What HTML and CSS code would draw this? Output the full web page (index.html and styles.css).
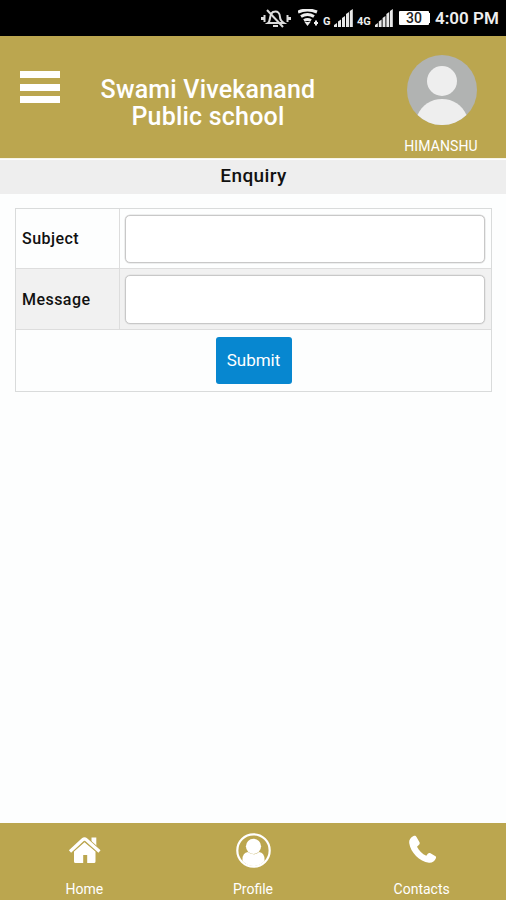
FILE: index.html
```html
<!DOCTYPE html>
<html lang="en">
<head>
  <meta charset="UTF-8" />
  <meta name="viewport" content="width=device-width, initial-scale=1.0" />
  <title>Enquiry</title>
  <link rel="stylesheet" href="styles.css">
</head>
<body>
  <div class="statusbar">
    <svg class="bell" width="32" height="20" viewBox="0 0 32 20" fill="none" stroke="#dcdcdc" stroke-width="2">
      <path d="M8 14c3-2 1-9 5-11 5-2 7 2 7 5 0 3 1 4 4 6z" />
      <path d="M13 17h5" />
      <path d="M7 1l16 17" />
      <path d="M4.500 6v7M27.500 6v7" />
      <path d="M1 9.500h4M27 9.500h4" stroke-width="3" />
    </svg>
    <svg class="wifi" width="21" height="18" viewBox="0 0 21 18" fill="none" stroke="#eee" stroke-width="3">
      <path d="M0 3q9.500-4 19 0M3 7.500q6.500-4 13 0M6 11.500q3.500-2 7 0" />
      <path d="M6.500 13h6L9.500 17z" fill="#eee" stroke="none" />
      <path d="M18 11.500v5M16 14h4" stroke-width="2" />
    </svg>
    <span class="net net-g">G</span>
    <svg class="bars" width="19" height="18" viewBox="0 0 19 18" fill="#e8e8e8">
      <path d="M0 16l3-2v4H0zM4 12.500l3-2V18H4zM8 9l3-2v11H8zM12 5l3-2v15h-3zM15.800 2l3-2v18h-3z" />
    </svg>
    <span class="net net-4g">4G</span>
    <svg class="bars" width="18" height="18" viewBox="0 0 19 18" preserveAspectRatio="none" fill="#e8e8e8">
      <path d="M0 16l3-2v4H0zM4 12.500l3-2V18H4zM8 9l3-2v11H8zM12 5l3-2v15h-3zM15.800 2l3-2v18h-3z" />
    </svg>
    <span class="battery">30</span>
    <span class="time">4:00 PM</span>
  </div>

  <header class="header">
    <div class="menu">
      <span></span>
      <span></span>
      <span></span>
    </div>
    <h1 class="school">Swami Vivekanand<br>Public school</h1>
    <div class="user">
      <svg width="70" height="70" viewBox="0 0 70 70">
        <circle cx="35" cy="35" r="35" fill="#b1b3b2" />
        <circle cx="35" cy="26" r="15" fill="#eee" />
        <path d="M10.500 60C15 50 24 44 35 44s20 6 24.500 16A35 35 0 0 1 10.500 60z" fill="#eee" />
      </svg>
      <span class="username">HIMANSHU</span>
    </div>
  </header>

  <h2 class="title">Enquiry</h2>

  <main class="content">
    <form class="form">
      <div class="row">
        <label class="label" for="subject">Subject</label>
        <div class="field"><input type="text" id="subject"></div>
      </div>
      <div class="row row-alt">
        <label class="label" for="message">Message</label>
        <div class="field"><input type="text" id="message"></div>
      </div>
      <div class="row row-submit">
        <button type="button" class="submit">Submit</button>
      </div>
    </form>
  </main>

  <nav class="tabs">
    <a class="tab">
      <svg width="36" height="36" viewBox="0 0 36 36" fill="#fff">
        <path d="M18.500 10.200L29.500 19.500V29.500q0 1.500-1.500 1.500h-6.800v-8h-4v8H9.500Q8 31 8 29.500v-10z" />
        <path d="M25.500 5.500h4.800v10L25.500 11z" />
        <path d="M4 19.500L16.700 7.800q1.800-1.600 3.600 0L33.500 19.500" fill="none" stroke="#bba64f" stroke-width="5" />
        <path d="M4 19.500L16.700 7.800q1.800-1.600 3.600 0L33.500 19.500" fill="none" stroke="#fff" stroke-width="3.200" />
      </svg>
      <span>Home</span>
    </a>
    <a class="tab">
      <svg width="36" height="36" viewBox="0 0 36 36" fill="#fff">
        <circle cx="18.500" cy="18.500" r="16.200" fill="none" stroke="#fff" stroke-width="2.200" />
        <path d="M7.500 29q-.500-8.500 5.500-9h11q6 .500 5.500 9-4.500 5-11 5t-11-5z" />
        <circle cx="18.500" cy="14" r="8.300" fill="#bba64f" />
        <circle cx="18.500" cy="14.300" r="7.600" />
      </svg>
      <span>Profile</span>
    </a>
    <a class="tab">
      <svg width="36" height="36" viewBox="0 0 36 36" fill="#fff">
        <path d="M9 3.500C6 5 4.300 7.500 4.700 10.500 6 20 15 29 24.500 30.300c3 .3 6-1.800 7-4.800.3-1-.1-1.700-.9-2.100L26 20.800c-1-.5-2-.3-2.700.5l-1.500 1.900c-4-1.800-7.400-5-9.300-9l2-2c.8-.7.900-1.500.5-2.500L12 4.500C11.300 3 10.200 2.900 9 3.500z" transform="translate(.5 .5)" />
      </svg>
      <span>Contacts</span>
    </a>
  </nav>
</body>
</html>
```

FILE: styles.css
```css
* {
  box-sizing: border-box;
}
html, body {
  margin: 0;
  padding: 0;
  height: 100%;
}
body {
  display: flex;
  flex-direction: column;
  background-color: #fdfefe;
  font-family: Roboto, sans-serif;
  overflow: hidden;
}
.statusbar {
  height: 36px;
  flex: none;
  display: flex;
  align-items: flex-start;
  padding: 9px 0 0 260px;
  background: #000;
  color: #eee;
}
.statusbar svg {
  flex: none;
}
.wifi {
  margin-left: 6px;
}
.net {
  flex: none;
  margin-top: 8px;
  font-size: 11px;
  line-height: 10px;
  font-weight: 700;
}
.net-g {
  width: 11px;
  margin-left: 4px;
}
.net-4g {
  width: 18px;
  margin-left: 4px;
}
.battery {
  flex: none;
  width: 30px;
  height: 14px;
  margin: 2px 0 0 6px;
  background: #fff;
  border-radius: 1px;
  color: #222;
  font-size: 14px;
  line-height: 15px;
  font-weight: 500;
  text-align: center;
  box-shadow: 4px 0 0 -3px #fff, 3px 0 0 -2px #fff;
}
.time {
  margin-left: 6px;
  font-size: 17px;
  line-height: 19px;
  font-weight: 600;
  white-space: nowrap;
}
.header {
  height: 123px;
  flex: none;
  display: flex;
  align-items: flex-start;
  background: #bba64f;
  border-bottom: 1px solid #f7f5e9;
  color: #fff;
}
.menu {
  width: 40px;
  margin: 35px 0 0 20px;
  display: flex;
  flex-direction: column;
  gap: 5.500px;
}
.menu span {
  height: 7px;
  background: #fff;
}
.school {
  flex: 1;
  margin: 40px 41px 0 0;
  font-size: 25px;
  line-height: 27px;
  font-weight: 500;
  letter-spacing: 0.200px;
  text-align: center;
  white-space: nowrap;
}
.user {
  width: 90px;
  margin: 19px 19px 0 0;
  display: flex;
  flex-direction: column;
  align-items: center;
}
.username {
  margin: 13px 2px 0 0;
  font-size: 14px;
  line-height: 16px;
  letter-spacing: 0.100px;
}
.title {
  height: 34px;
  flex: none;
  margin: 1px 0 0;
  padding-left: 1px;
  background: #eee;
  color: #111;
  font-size: 19px;
  line-height: 32px;
  font-weight: 500;
  letter-spacing: 0.400px;
  text-align: center;
}
.content {
  flex: 1;
  padding: 14px 14px 0 15px;
}
.form {
  border: 1px solid #d9dbdb;
}
.row {
  display: flex;
  height: 60px;
  border-bottom: 1px solid #ddd;
}
.row-alt {
  height: 61px;
  background: #f1f1f1;
}
.label {
  width: 104px;
  display: flex;
  align-items: center;
  padding-left: 6px;
  border-right: 1px solid #ddd;
  color: #111;
  font-size: 16px;
  font-weight: 500;
  letter-spacing: 0.450px;
}
.field {
  flex: 1;
  padding: 6px 6px 5px 5px;
}
.field input {
  display: block;
  width: 100%;
  height: 100%;
  border: 1px solid #c8c8c8;
  border-radius: 5px;
  background: #fff;
  box-shadow: 0 0 0 0.500px #ddd;
}
.row-submit {
  height: 61px;
  justify-content: center;
  align-items: flex-start;
  padding-top: 7px;
  border-bottom: 0;
}
.submit {
  width: 76px;
  height: 47px;
  padding: 0 0 2px;
  border: 0;
  border-radius: 3px;
  background: #0787d0;
  color: #fff;
  font-family: inherit;
  font-size: 17px;
}
.tabs {
  height: 77px;
  flex: none;
  display: flex;
  background: #bba64f;
  color: #fff;
}
.tab {
  flex: 1;
  display: flex;
  flex-direction: column;
  align-items: center;
  padding-top: 9px;
  font-size: 14px;
  line-height: 16px;
}
.tab span {
  margin-top: 13px;
}
```
